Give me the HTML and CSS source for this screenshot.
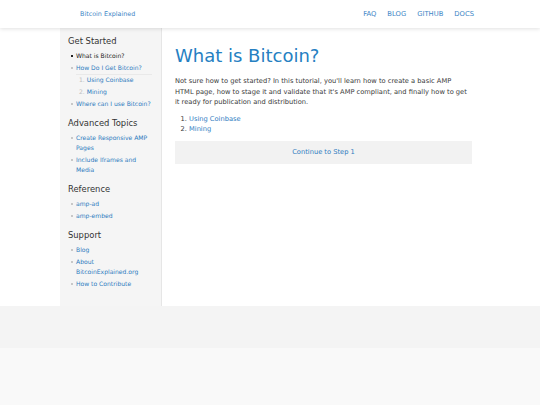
FILE: index.html
```html
<!DOCTYPE html>
<html>
<head>
<meta charset="utf-8">
<link rel="stylesheet" href="styles.css">
</head>
<body>
<header class="topbar">
  <div class="topbar-inner">
    <a class="brand" href="#">Bitcoin Explained</a>
    <nav class="nav">
      <a href="#">FAQ</a>
      <a href="#">BLOG</a>
      <a href="#">GITHUB</a>
      <a href="#">DOCS</a>
    </nav>
  </div>
</header>
<div class="page">
  <div class="container">
    <aside class="sidebar">
      <h3 class="side-title">Get Started</h3>
      <ul class="side-list">
        <li class="active">What is Bitcoin?</li>
        <li><a href="#">How Do I Get Bitcoin?</a>
          <ol class="sub-list">
            <li><a href="#">Using Coinbase</a></li>
            <li><a href="#">Mining</a></li>
          </ol>
        </li>
        <li><a href="#">Where can I use Bitcoin?</a></li>
      </ul>
      <h3 class="side-title">Advanced Topics</h3>
      <ul class="side-list">
        <li><a href="#">Create Responsive AMP Pages</a></li>
        <li><a href="#">Include Iframes and Media</a></li>
      </ul>
      <h3 class="side-title">Reference</h3>
      <ul class="side-list">
        <li><a href="#">amp-ad</a></li>
        <li><a href="#">amp-embed</a></li>
      </ul>
      <h3 class="side-title">Support</h3>
      <ul class="side-list">
        <li><a href="#">Blog</a></li>
        <li><a href="#">About BitcoinExplained.org</a></li>
        <li><a href="#">How to Contribute</a></li>
      </ul>
    </aside>
    <main class="content">
      <h1 class="title">What is Bitcoin?</h1>
      <p class="intro">Not sure how to get started? In this tutorial, you'll learn how to create a basic AMP HTML page, how to stage it and validate that it's AMP compliant, and finally how to get it ready for publication and distribution.</p>
      <ol class="steps">
        <li><a href="#">Using Coinbase</a></li>
        <li><a href="#">Mining</a></li>
      </ol>
      <a class="next" href="#">Continue to Step 1</a>
    </main>
  </div>
</div>
<footer class="footer"></footer>
</body>
</html>
```
FILE: styles.css
```css
html, body {
  margin: 0;
  padding: 0;
}
body {
  background: #f9f9f9;
  font-family: "DejaVu Sans", Verdana, sans-serif;
  font-size: 6px;
  color: #3a3a3a;
}
a {
  color: #2f7cbf;
  text-decoration: none;
}
.topbar {
  background: #fff;
  height: 28px;
  box-shadow: 0 1px 4px rgba(0,0,0,0.12);
  position: relative;
  z-index: 1;
}
.topbar-inner {
  width: 420px;
  margin: 0 auto;
  height: 28px;
  display: flex;
  align-items: center;
  justify-content: space-between;
  padding: 0 6px 0 20px;
  box-sizing: border-box;
}
.brand {
  font-size: 6.4px;
  color: #3d86c6;
}
.nav {
  display: flex;
  gap: 11px;
}
.nav a {
  font-size: 6.8px;
  color: #3d86c6;
}
.page {
  background: #fff;
}
.container {
  width: 420px;
  margin: 0 auto;
  display: flex;
  min-height: 278px;
}
.sidebar {
  width: 84px;
  flex: none;
  background: #f5f5f5;
  border-right: 1px solid #e6e6e6;
  padding: 8px 9px 0 8px;
}
.side-title {
  margin: 0 0 4px;
  font-size: 8.4px;
  font-weight: normal;
  color: #333;
  line-height: 11px;
}
.side-list {
  list-style: none;
  margin: 0 0 9px;
  padding: 0;
}
.side-list > li {
  position: relative;
  padding-left: 8px;
  line-height: 10px;
  margin-bottom: 2px;
  font-size: 6.05px;
}
.side-list > li::before {
  content: "";
  position: absolute;
  left: 3px;
  top: 4px;
  width: 2px;
  height: 2px;
  background: #c8c8c8;
}
.side-list > li.active {
  color: #222;
}
.side-list > li.active::before {
  background: #222;
}
.sub-list {
  margin: 1px 0 0 0;
  padding: 0 0 0 3px;
  border-top: 1px solid #e9e9e9;
  list-style: none;
  counter-reset: sub;
}
.sub-list li {
  counter-increment: sub;
  line-height: 10px;
  margin-bottom: 2px;
}
.sub-list li::before {
  content: counter(sub) ". ";
  color: #c0c0c0;
}
.content {
  flex: 1;
  padding: 17px 8px 0 13px;
}
.title {
  margin: 0;
  font-size: 18px;
  font-weight: normal;
  color: #2680c2;
  line-height: 22px;
}
.intro {
  margin: 9px 0 6px;
  padding-right: 2px;
  line-height: 10.5px;
  font-size: 6.7px;
}
.steps {
  margin: 0 0 7px;
  padding-left: 14px;
  line-height: 10px;
  font-size: 6.7px;
}
.next {
  display: block;
  background: #f2f2f2;
  text-align: center;
  height: 23px;
  line-height: 23px;
  font-size: 6.7px;
}
.footer {
  height: 42px;
  background: #f4f4f4;
}
```
